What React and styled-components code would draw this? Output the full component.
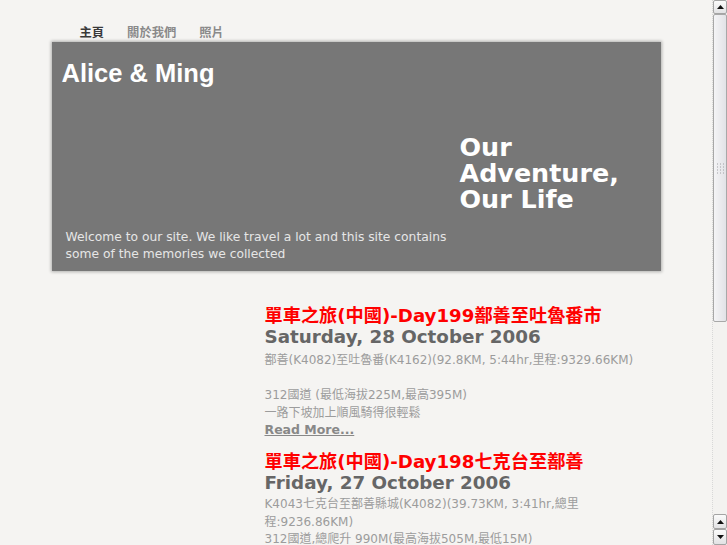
import React from "react";
import styled, { createGlobalStyle } from "styled-components";

const GlobalStyle = createGlobalStyle`
  html, body {
    margin: 0;
    padding: 0;
    background: #f5f4f2;
    overflow: hidden;
  }
`;

const Frame = styled.div`
  display: flex;
  height: 100vh;
`;

const Page = styled.div`
  flex: 1;
  min-width: 0;
  overflow: hidden;
  font-family: "DejaVu Sans", "Noto Sans CJK TC", sans-serif;
`;

const Container = styled.div`
  width: 609px;
  margin: 0 auto;
`;

const Nav = styled.nav`
  display: flex;
  gap: 23px;
  padding: 24px 0 0 28px;
  margin-bottom: 2px;
`;

const NavItem = styled.a`
  font-family: "Noto Sans CJK TC", sans-serif;
  font-size: 12.3px;
  font-weight: 700;
  line-height: 16px;
  color: ${(p) => (p.$active ? "#3a3a3a" : "#8a8a8a")};
  text-decoration: none;
`;

const Header = styled.header`
  height: 229px;
  box-sizing: border-box;
  background: #777777;
  box-shadow: 0 0 3px 1px rgba(0, 0, 0, 0.28);
  padding: 16px 10px 8px 10px;
  display: flex;
  flex-direction: column;
`;

const SiteTitle = styled.h1`
  margin: 0;
  font-family: "Liberation Sans", Arial, sans-serif;
  font-size: 25.5px;
  font-weight: 700;
  line-height: 30px;
  color: #ffffff;
`;

const Tagline = styled.div`
  margin: 46px 0 0 398px;
  width: 190px;
  font-family: "DejaVu Sans", sans-serif;
  font-size: 25.4px;
  font-weight: 700;
  line-height: 26px;
  color: #ffffff;
`;

const Welcome = styled.p`
  margin: auto 0 0 4px;
  max-width: 398px;
  font-size: 12.3px;
  line-height: 17px;
  color: #e6e6e6;
`;

const Main = styled.main`
  margin: 34px 0 0 213px;
  width: 376px;
`;

const Post = styled.article`
  margin-bottom: 11px;
`;

const PostTitle = styled.h2`
  margin: 0;
  font-size: 18.2px;
  font-weight: 700;
  line-height: 21px;
  color: #ff0000;
`;

const PostDate = styled.h3`
  margin: 0;
  font-size: 18.3px;
  font-weight: 700;
  line-height: 21px;
  color: #666666;
`;

const PostBody = styled.div`
  margin-top: ${(p) => (p.$tight ? 3 : 5)}px;
  font-size: 12px;
  line-height: 17.6px;
  color: #9c9c9c;
`;

const ReadMore = styled.a`
  display: inline-block;
  font-size: 12.5px;
  font-weight: 700;
  line-height: 16px;
  color: #888888;
  text-decoration: underline;
`;

/* classic scrollbar shown at the right edge of the screenshot */
const ScrollBar = styled.div`
  width: 15px;
  flex: none;
  display: flex;
  flex-direction: column;
  background: #f3f2f0;
  border-left: 1px dotted #d8d8d8;
  box-sizing: border-box;
`;

const ScrollButton = styled.div`
  height: ${(p) => p.$h}px;
  flex: none;
  box-sizing: border-box;
  border: 1px solid #a4a4a4;
  border-radius: 2px;
  background: linear-gradient(#fbfbfb, #e2e2e4);
  display: flex;
  align-items: center;
  justify-content: center;
`;

const Thumb = styled.div`
  height: 308px;
  flex: none;
  box-sizing: border-box;
  border: 1px solid #a8a8a8;
  border-radius: 2px;
  background: linear-gradient(90deg, #f4f4f6, #e2e2e6);
  display: flex;
  align-items: center;
  justify-content: center;
`;

const Track = styled.div`
  flex: 1;
`;

const Arrow = ({ down }) => (
  <svg width="7" height="4" viewBox="0 0 7 4">
    {down ? (
      <polygon points="0,0 7,0 3.5,4" fill="#111" />
    ) : (
      <polygon points="3.5,0 7,4 0,4" fill="#111" />
    )}
  </svg>
);

const Grip = () => (
  <svg width="9" height="11" viewBox="0 0 9 11">
    {[0, 1, 2, 3].map((r) =>
      [0, 1, 2].map((c) => (
        <rect key={`${r}-${c}`} x={c * 3 + 1} y={r * 3 + 0.5} width="1" height="1" fill="#a0a0a4" />
      ))
    )}
  </svg>
);

export default function App() {
  return (
    <>
      <GlobalStyle />
      <Frame>
        <Page>
          <Container>
            <Nav>
              <NavItem $active>主頁</NavItem>
              <NavItem>關於我們</NavItem>
              <NavItem>照片</NavItem>
            </Nav>
            <Header>
              <SiteTitle>Alice &amp; Ming</SiteTitle>
              <Tagline>Our Adventure, Our Life</Tagline>
              <Welcome>
                Welcome to our site. We like travel a lot and this site contains some of the memories we collected
              </Welcome>
            </Header>
            <Main>
              <Post>
                <PostTitle>單車之旅(中國)-Day199鄯善至吐魯番市</PostTitle>
                <PostDate>Saturday, 28 October 2006</PostDate>
                <PostBody>
                  鄯善(K4082)至吐魯番(K4162)(92.8KM, 5:44hr,里程:9329.66KM)
                  <br />
                  <br />
                  312國道 (最低海拔225M,最高395M)
                  <br />
                  一路下坡加上順風騎得很輕鬆
                  <br />
                  <ReadMore>Read More...</ReadMore>
                </PostBody>
              </Post>
              <Post>
                <PostTitle>單車之旅(中國)-Day198七克台至鄯善</PostTitle>
                <PostDate>Friday, 27 October 2006</PostDate>
                <PostBody $tight>
                  K4043七克台至鄯善縣城(K4082)(39.73KM, 3:41hr,總里程:9236.86KM)
                  <br />
                  312國道,總爬升 990M(最高海拔505M,最低15M)
                </PostBody>
              </Post>
            </Main>
          </Container>
        </Page>
        <ScrollBar>
          <ScrollButton $h={14}>
            <Arrow />
          </ScrollButton>
          <Thumb>
            <Grip />
          </Thumb>
          <Track />
          <ScrollButton $h={15}>
            <Arrow />
          </ScrollButton>
          <ScrollButton $h={16}>
            <Arrow down />
          </ScrollButton>
        </ScrollBar>
      </Frame>
    </>
  );
}
